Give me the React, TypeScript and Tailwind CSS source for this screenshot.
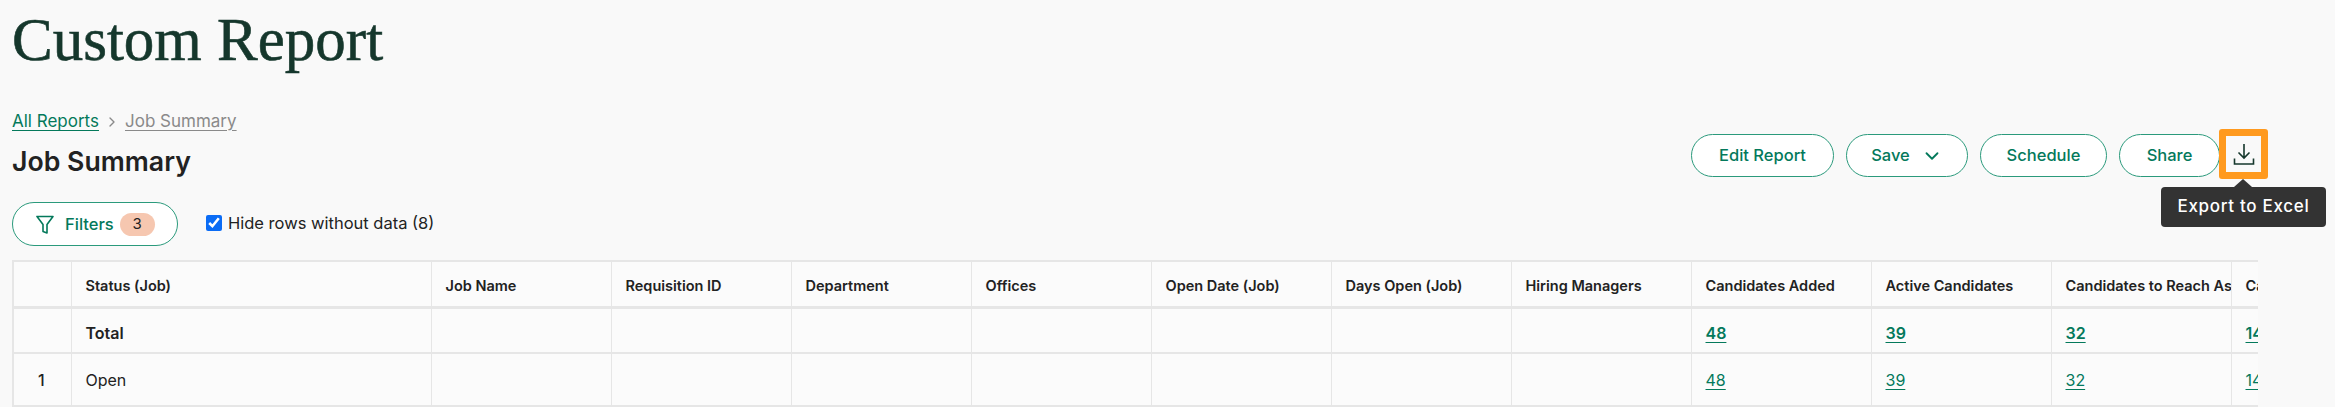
import { ChevronDown, ChevronRight } from "lucide-react";

const columns = [
  { label: "", width: "w-[58px]" },
  { label: "Status (Job)", width: "w-[360px]" },
  { label: "Job Name", width: "w-[180px]" },
  { label: "Requisition ID", width: "w-[180px]" },
  { label: "Department", width: "w-[180px]" },
  { label: "Offices", width: "w-[180px]" },
  { label: "Open Date (Job)", width: "w-[180px]" },
  { label: "Days Open (Job)", width: "w-[180px]" },
  { label: "Hiring Managers", width: "w-[180px]" },
  { label: "Candidates Added", width: "w-[180px]" },
  { label: "Active Candidates", width: "w-[180px]" },
  { label: "Candidates to Reach Assessment", width: "w-[180px]" },
  { label: "Candidates Hired", width: "w-[180px]" },
];

const blanks = [2, 3, 4, 5, 6, 7, 8];
const counts = ["48", "39", "32", "14"];

function PillButton({ children }: { children: React.ReactNode }) {
  return (
    <button className="flex h-[43px] w-full items-center justify-center gap-[11px] rounded-full border border-[#2b9a7c] bg-white text-[16.500px] font-medium text-[#04795b]">
      {children}
    </button>
  );
}

function Row({ index, label, bold }: { index?: string; label: string; bold?: boolean }) {
  const weight = bold ? "font-semibold" : "font-normal";
  const pad = bold ? "pt-[5px]" : "pt-[1px]";
  return (
    <tr className="h-[46px] border-b-2 border-[#e6e6e6] last:h-[53px]">
      <td className={`border-r border-[#e6e6e6] pl-[24px] text-[16px] font-medium text-[#222] ${pad}`}>{index}</td>
      <td className={`border-r border-[#e6e6e6] pl-[14px] text-[16px] text-[#222] ${pad} ${weight}`}>{label}</td>
      {blanks.map((b) => (
        <td key={b} className="border-r border-[#e6e6e6]" />
      ))}
      {counts.map((n) => (
        <td key={n} className={`overflow-hidden border-r border-[#e6e6e6] pl-[14px] last:border-r-0 ${pad}`}>
          <a className={`text-[16px] text-[#04795b] underline underline-offset-[3px] ${weight}`}>{n}</a>
        </td>
      ))}
    </tr>
  );
}

export default function App() {
  return (
    <div className="h-[407px] overflow-hidden bg-[#f9f9f9] pl-3 font-['Inter',sans-serif]">
      <h1 className="h-[112px] pt-[4px] font-['Liberation_Serif',serif] text-[61px] leading-[72px] text-[#15372c] [-webkit-text-stroke:0.6px_#15372c]">
        Custom Report
      </h1>

      {/* Breadcrumbs + actions */}
      <div className="flex h-[90px] items-start justify-between pr-[67px]">
        <div>
          <nav className="flex h-[19px] items-center text-[17px] leading-[19px]">
            <a className="text-[#04795b] underline underline-offset-[3px]">All Reports</a>
            <ChevronRight className="mx-[5px] h-[16px] w-[16px] text-[#8a8a8a]" />
            <a className="text-[#8a8a8a] underline underline-offset-[3px]">Job Summary</a>
          </nav>
          <h2 className="mt-[14px] text-[26.700px] leading-[32px] font-semibold text-[#222]">Job Summary</h2>
        </div>

        <div className="relative mt-[22px] flex items-start">
          <div className="flex gap-[12px]">
            <div className="w-[143px]">
              <PillButton>Edit Report</PillButton>
            </div>
            <div className="w-[122px]">
              <PillButton>
                Save
                <ChevronDown className="h-[22px] w-[22px]" />
              </PillButton>
            </div>
            <div className="w-[127px]">
              <PillButton>Schedule</PillButton>
            </div>
            <div className="w-[101px]">
              <PillButton>Share</PillButton>
            </div>
          </div>

          <button className="-mt-[5px] -ml-[1px] flex h-[50px] w-[49px] items-center justify-center rounded-[3px] border-[7px] border-[#ff9a1f] bg-[#f9f9f9]">
            <svg width="22" height="24" viewBox="0 0 22 24" fill="none" stroke="#15372c" strokeWidth="1.6">
              <path d="M11 2v14M5.500 10.500 11 16l5.500-5.500" />
              <path d="M1.500 16.500v5.500h19v-5.500" />
            </svg>
          </button>

          {/* Tooltip */}
          <div className="absolute top-[53px] right-[-58px] flex h-[40px] w-[165px] items-center justify-center rounded-[4px] bg-[#333] text-[17px] font-medium tracking-[0.7px] text-white">
            Export to Excel
            <span className="absolute top-[-8px] left-[73px] h-0 w-0 border-x-[9px] border-b-[8px] border-x-transparent border-b-[#333]" />
          </div>
        </div>
      </div>

      {/* Filters */}
      <div className="flex h-[44px] items-start">
        <button className="flex h-[44px] w-[166px] items-center rounded-full border border-[#2b9a7c] bg-white pt-[1px] pl-[23px] text-[16.500px] font-medium text-[#04795b]">
          <svg width="18" height="20" viewBox="0 0 18 20" fill="none" stroke="#04795b" strokeWidth="1.600" strokeLinejoin="round">
            <path d="M1 1.500h16L11 9.500v8.500l-4-1.500v-7z" />
          </svg>
          <span className="ml-[11px]">Filters</span>
          <span className="ml-[6px] flex h-[23px] w-[35px] items-center justify-center rounded-full bg-[#f6c7b0] text-[15px] font-normal text-[#222]">
            3
          </span>
        </button>
        <label className="mt-[11px] ml-[28px] flex items-center text-[16.500px] leading-[20px] text-[#222]">
          <input type="checkbox" defaultChecked className="h-4 w-4 accent-[#0b6cf5]" />
          <span className="ml-[6px]">Hide rows without data (8)</span>
        </label>
      </div>

      {/* Report table */}
      <div className="mt-[14px] w-[2246px] overflow-hidden">
        <table className="w-[2398px] table-fixed border-collapse border-t-2 border-l-2 border-[#e6e6e6] bg-[#fbfbfb]">
          <colgroup>
            {columns.map((c) => (
              <col key={c.label} className={c.width} />
            ))}
          </colgroup>
          <thead>
            <tr className="h-[46px] border-b-[3px] border-[#e6e6e6]">
              {columns.map((c) => (
                <th
                  key={c.label}
                  className="overflow-hidden border-r border-[#e6e6e6] pt-[5px] pl-[14px] text-left text-[14.500px] font-semibold whitespace-nowrap text-[#222]"
                >
                  {c.label}
                </th>
              ))}
            </tr>
          </thead>
          <tbody>
            <Row label="Total" bold />
            <Row index="1" label="Open" />
          </tbody>
        </table>
      </div>
    </div>
  );
}
